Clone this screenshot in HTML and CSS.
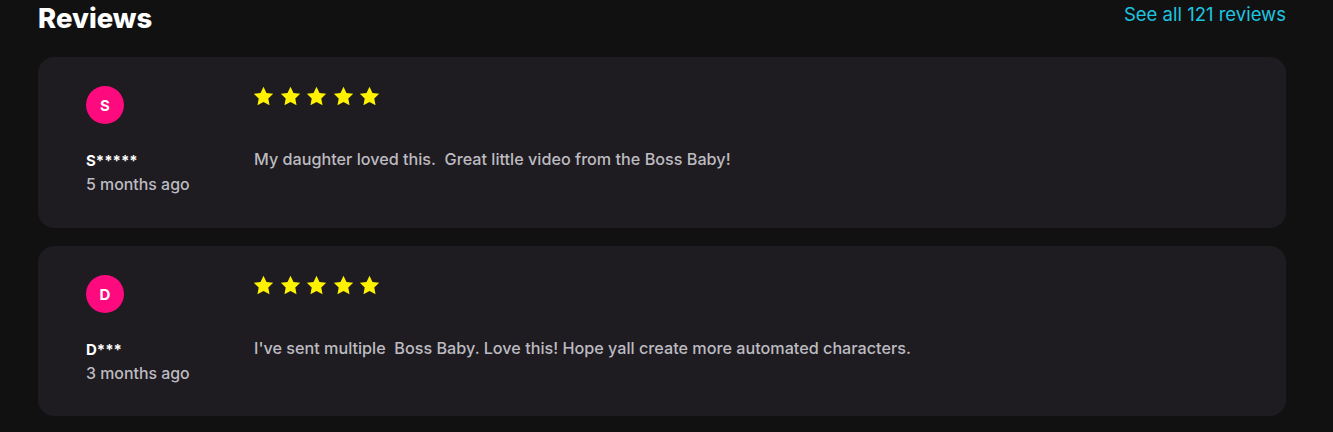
FILE: index.html
```html
<!DOCTYPE html>
<html>
<head>
<meta charset="utf-8">
<link rel="stylesheet" href="styles.css">
</head>
<body>
<section class="reviews">
  <div class="head">
    <h2 class="title">Reviews</h2>
    <a class="see-all" href="#">See all 121 reviews</a>
  </div>
  <div class="list">
    <div class="card">
      <div class="author">
        <div class="avatar">S</div>
        <div class="name">S*****</div>
        <div class="date">5 months ago</div>
      </div>
      <div class="body">
        <div class="stars">
          <svg viewBox="0 0 24 24"><path d="M12 1.8l3.1 6.5 7 .9-5.1 4.9 1.3 7-6.3-3.4-6.3 3.4 1.3-7L1.9 9.2l7-.9z"/></svg>
          <svg viewBox="0 0 24 24"><path d="M12 1.8l3.1 6.5 7 .9-5.1 4.9 1.3 7-6.3-3.4-6.3 3.4 1.3-7L1.9 9.2l7-.9z"/></svg>
          <svg viewBox="0 0 24 24"><path d="M12 1.8l3.1 6.5 7 .9-5.1 4.9 1.3 7-6.3-3.4-6.3 3.4 1.3-7L1.9 9.2l7-.9z"/></svg>
          <svg viewBox="0 0 24 24"><path d="M12 1.8l3.1 6.5 7 .9-5.1 4.9 1.3 7-6.3-3.4-6.3 3.4 1.3-7L1.9 9.2l7-.9z"/></svg>
          <svg viewBox="0 0 24 24"><path d="M12 1.8l3.1 6.5 7 .9-5.1 4.9 1.3 7-6.3-3.4-6.3 3.4 1.3-7L1.9 9.2l7-.9z"/></svg>
        </div>
        <p class="text">My daughter loved this.&nbsp; Great little video from the Boss Baby!</p>
      </div>
    </div>
    <div class="card">
      <div class="author">
        <div class="avatar">D</div>
        <div class="name">D***</div>
        <div class="date">3 months ago</div>
      </div>
      <div class="body">
        <div class="stars">
          <svg viewBox="0 0 24 24"><path d="M12 1.8l3.1 6.5 7 .9-5.1 4.9 1.3 7-6.3-3.4-6.3 3.4 1.3-7L1.9 9.2l7-.9z"/></svg>
          <svg viewBox="0 0 24 24"><path d="M12 1.8l3.1 6.5 7 .9-5.1 4.9 1.3 7-6.3-3.4-6.3 3.4 1.3-7L1.9 9.2l7-.9z"/></svg>
          <svg viewBox="0 0 24 24"><path d="M12 1.8l3.1 6.5 7 .9-5.1 4.9 1.3 7-6.3-3.4-6.3 3.4 1.3-7L1.9 9.2l7-.9z"/></svg>
          <svg viewBox="0 0 24 24"><path d="M12 1.8l3.1 6.5 7 .9-5.1 4.9 1.3 7-6.3-3.4-6.3 3.4 1.3-7L1.9 9.2l7-.9z"/></svg>
          <svg viewBox="0 0 24 24"><path d="M12 1.8l3.1 6.5 7 .9-5.1 4.9 1.3 7-6.3-3.4-6.3 3.4 1.3-7L1.9 9.2l7-.9z"/></svg>
        </div>
        <p class="text">I've sent multiple&nbsp; Boss Baby. Love this! Hope yall create more automated characters.</p>
      </div>
    </div>
  </div>
</section>
</body>
</html>
```
FILE: styles.css
```css
html, body {
  margin: 0;
  padding: 0;
  background: #111111;
}
body {
  font-family: Inter, "Noto Sans", sans-serif;
  color: #ffffff;
}
.reviews {
  padding: 0 47px 0 38px;
}
.head {
  display: flex;
  justify-content: space-between;
  align-items: flex-start;
  height: 57px;
}
.title {
  margin: 0;
  font-size: 27.5px;
  font-weight: 800;
  line-height: 36px;
  letter-spacing: 0;
}
.see-all {
  color: #1fc5e0;
  text-decoration: none;
  font-size: 18.5px;
  line-height: 28px;
}
.list {
  display: flex;
  flex-direction: column;
  gap: 18px;
}
.card {
  background: #1e1c20;
  border-radius: 16px;
  height: 171px;
  box-sizing: border-box;
  padding: 29px 48px 0;
  display: flex;
}
.card:last-child {
  height: 170px;
}
.author {
  width: 168px;
  display: flex;
  flex-direction: column;
}
.avatar {
  width: 38px;
  height: 38px;
  border-radius: 50%;
  background: #fc0a7e;
  color: #fff;
  font-weight: 700;
  font-size: 15px;
  display: flex;
  align-items: center;
  justify-content: center;
  margin-bottom: 27px;
}
.name {
  font-size: 15px;
  font-weight: 700;
  line-height: 20px;
}
.date {
  font-size: 15.9px;
  font-weight: 500;
  color: #bdbbc1;
  line-height: 28px;
}
.body {
  display: flex;
  flex-direction: column;
}
.stars {
  display: flex;
  gap: 3.6px;
  margin: -1px 0 0 -2px;
}
.stars svg {
  width: 23px;
  height: 23px;
  fill: #fff200;
}
.text {
  margin: 40px 0 0;
  font-size: 16.2px;
  font-weight: 500;
  color: #bdbbc1;
  line-height: 22px;
}
```
